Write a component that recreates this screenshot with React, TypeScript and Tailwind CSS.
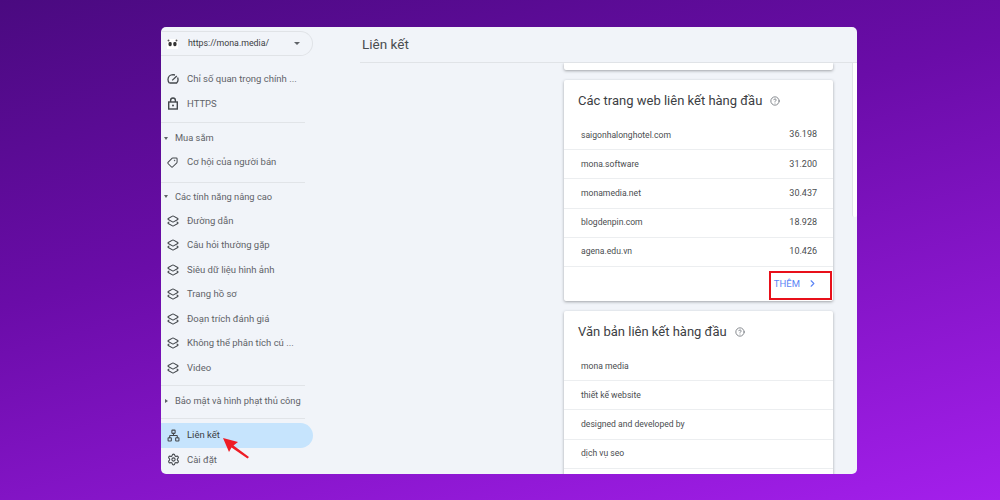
import { ChevronRight, CircleHelp, Layers2, Network, Settings, Tag } from "lucide-react";

const font = "font-['Roboto','Liberation_Sans',sans-serif]";

const sites = [
  ["saigonhalonghotel.com", "36.198"],
  ["mona.software", "31.200"],
  ["monamedia.net", "30.437"],
  ["blogdenpin.com", "18.928"],
  ["agena.edu.vn", "10.426"],
];

const anchors = ["mona media", "thiết kế website", "designed and developed by", "dịch vụ seo", ""];

const enhancements = [
  "Đường dẫn",
  "Câu hỏi thường gặp",
  "Siêu dữ liệu hình ảnh",
  "Trang hồ sơ",
  "Đoạn trích đánh giá",
  "Không thể phân tích cú ...",
  "Video",
];

function SpeedIcon() {
  return (
    <svg width="12" height="12" viewBox="0 0 12 12" fill="none" stroke="currentColor" strokeWidth="1.3">
      <path d="M2.4 10 A4.9 4.9 0 0 1 1 6.5 A5 5 0 0 1 6 1.6 L8 2" />
      <path d="M10.6 4.6 A5 5 0 0 1 9.6 10 H2.4" />
      <path d="M5.2 7.4 L9.8 3" />
    </svg>
  );
}

function LockIcon() {
  return (
    <svg width="12" height="13" viewBox="0 0 12 13" fill="none" stroke="currentColor" strokeWidth="1.4">
      <rect x="1.7" y="5" width="8.6" height="7" />
      <path d="M3.6 5 V3.4 A2.4 2.4 0 0 1 8.4 3.4 V5" />
      <circle cx="6" cy="8.5" r="1" fill="currentColor" stroke="none" />
    </svg>
  );
}

function NavItem({ icon, label, active }: { icon: React.ReactNode; label: string; active?: boolean }) {
  return (
    <div
      className={`flex items-center h-[24.5px] w-[152px] rounded-r-full pl-[6px] text-[9.5px] ${active ? "bg-[#c6e4fd] text-[#3c4043]" : "text-[#5f6368]"}`}
    >
      <span className="w-[20px] flex items-center text-[#44484d]">{icon}</span>
      {label}
    </div>
  );
}

function SectionHead({ label, open }: { label: string; open?: boolean }) {
  return (
    <div className="flex items-center h-[24px] text-[9.3px] text-[#5f6368]">
      <span className="w-[14px] pl-[3px]">
        {open ? (
          <span className="block w-0 h-0 border-x-[2.5px] border-t-[3px] border-x-transparent border-t-[#5f6368]" />
        ) : (
          <span className="block ml-[1px] w-0 h-0 border-y-[2.5px] border-l-[3px] border-y-transparent border-l-[#5f6368]" />
        )}
      </span>
      {label}
    </div>
  );
}

function Divider() {
  return <div className="h-px w-[144px] bg-[#e1e4e8]" />;
}

function Sidebar() {
  return (
    <aside className="w-[199px] shrink-0 flex flex-col">
      <div className="mt-[4px] flex items-center h-[25px] w-[152px] rounded-r-full border border-l-0 border-[#e0e3e7] pl-[6px] text-[8.8px] text-[#3c4043]">
        <span className="w-[21px] flex">
          <svg width="11" height="10" viewBox="0 0 11 10">
            <rect width="11" height="10" fill="#fff" />
            <circle cx="1.5" cy="1.5" r="1" fill="#555" />
            <circle cx="9.5" cy="1.5" r="1" fill="#555" />
            <rect x="1.5" y="3" width="3.2" height="4.2" rx="1.4" fill="#333" />
            <rect x="6.3" y="3" width="3.2" height="4.2" rx="1.4" fill="#333" />
          </svg>
        </span>
        https://mona.media/
        <span className="ml-auto mr-[12px] w-0 h-0 border-x-[3px] border-t-[3px] border-x-transparent border-t-[#5f6368]" />
      </div>
      <div className="mt-[11px]">
        <NavItem icon={<SpeedIcon />} label="Chỉ số quan trọng chính ..." />
        <NavItem icon={<LockIcon />} label="HTTPS" />
      </div>
      <div className="mt-[6px]"><Divider /></div>
      <div className="mt-[3px]"><SectionHead label="Mua sắm" open /></div>
      <NavItem icon={<Tag size={11} strokeWidth={2.2} className="-scale-x-100" />} label="Cơ hội của người bán" />
      <div className="mt-[7px]"><Divider /></div>
      <div className="mt-[2px]"><SectionHead label="Các tính năng nâng cao" open /></div>
      {enhancements.map((label) => (
        <NavItem key={label} icon={<Layers2 size={12} strokeWidth={2.2} />} label={label} />
      ))}
      <div className="mt-[5px]"><Divider /></div>
      <div className="mt-[3px]"><SectionHead label="Bảo mật và hình phạt thủ công" /></div>
      <div className="mt-[5px]"><Divider /></div>
      <div className="mt-[4px]">
        <NavItem active icon={<Network size={13} strokeWidth={2} />} label="Liên kết" />
      </div>
      <NavItem icon={<Settings size={13} strokeWidth={2} />} label="Cài đặt" />
    </aside>
  );
}

function Card({ title, children }: { title: string; children: React.ReactNode }) {
  return (
    <div className="bg-white rounded-[2px] shadow-[0_1px_3px_rgba(60,64,67,0.45)]">
      <div className="flex items-center h-[41px] pl-[14px] pt-[1px] text-[13px] text-[#3c4043]">
        {title}
        <CircleHelp size={10} className="ml-[8px] text-[#6f7479]" />
      </div>
      {children}
    </div>
  );
}

function Row({ label, value }: { label: string; value?: string }) {
  return (
    <div className="flex items-center justify-between h-[29.2px] pl-[17px] pr-[16px] border-b border-[#eceef0] text-[8.6px] text-[#4a4d50]">
      <span>{label}</span>
      {value && <span className="text-[9px]">{value}</span>}
    </div>
  );
}

export default function App() {
  return (
    <div className={`${font} relative w-[1000px] h-[500px] overflow-hidden flex items-center pl-[161px] bg-[linear-gradient(165deg,#4a0a80_0%,#6a0ca8_40%,#a41fec_100%)]`}>
      <div className="w-[696px] h-[447px] mt-[1px] bg-[#f1f4f9] rounded-[5px] overflow-hidden flex">
        <Sidebar />
        <main className="flex-1 flex flex-col min-w-0">
          <header className="h-[36px] w-[497px] flex items-center text-[13.5px] text-[#4a4d50] border-b border-[#e0e3e7] shrink-0">
            <span className="ml-[2px] -mt-[1px]">Liên kết</span>
          </header>
          <div className="flex-1 flex min-h-0 overflow-hidden">
            <div className="w-[204px] shrink-0" />
            <div className="w-[269px] shrink-0 flex flex-col gap-[10px]">
              <div className="h-[7px] shrink-0 bg-white rounded-b-[2px] shadow-[0_1px_3px_rgba(60,64,67,0.45)]" />
              <Card title="Các trang web liên kết hàng đầu">
                {sites.map(([label, value]) => (
                  <Row key={label} label={label} value={value} />
                ))}
                <div className="flex items-center justify-end h-[34px] pr-[15px] text-[9.5px] text-[#5c85f5]">
                  THÊM
                  <ChevronRight size={11} strokeWidth={2.5} className="ml-[7px]" />
                </div>
              </Card>
              <Card title="Văn bản liên kết hàng đầu">
                {anchors.map((label) => (
                  <Row key={label} label={label} />
                ))}
              </Card>
            </div>
            <div className="w-[5px] ml-[19px] h-[154px] bg-white border-l border-[#e0e3e8] rounded-b-[2px]" />
          </div>
        </main>
      </div>
      <div className="absolute left-[769px] top-[271px] w-[63px] h-[29px] border-2 border-[#e8101a] pointer-events-none" />
      <svg className="absolute left-[218px] top-[432px]" width="34" height="28" viewBox="0 0 34 28">
        <path d="M5 6 L20 10 L15.5 13.5 L31 25 L29.5 26.5 L13.5 15.5 L11 20 Z" fill="#ee1c25" />
      </svg>
    </div>
  );
}
